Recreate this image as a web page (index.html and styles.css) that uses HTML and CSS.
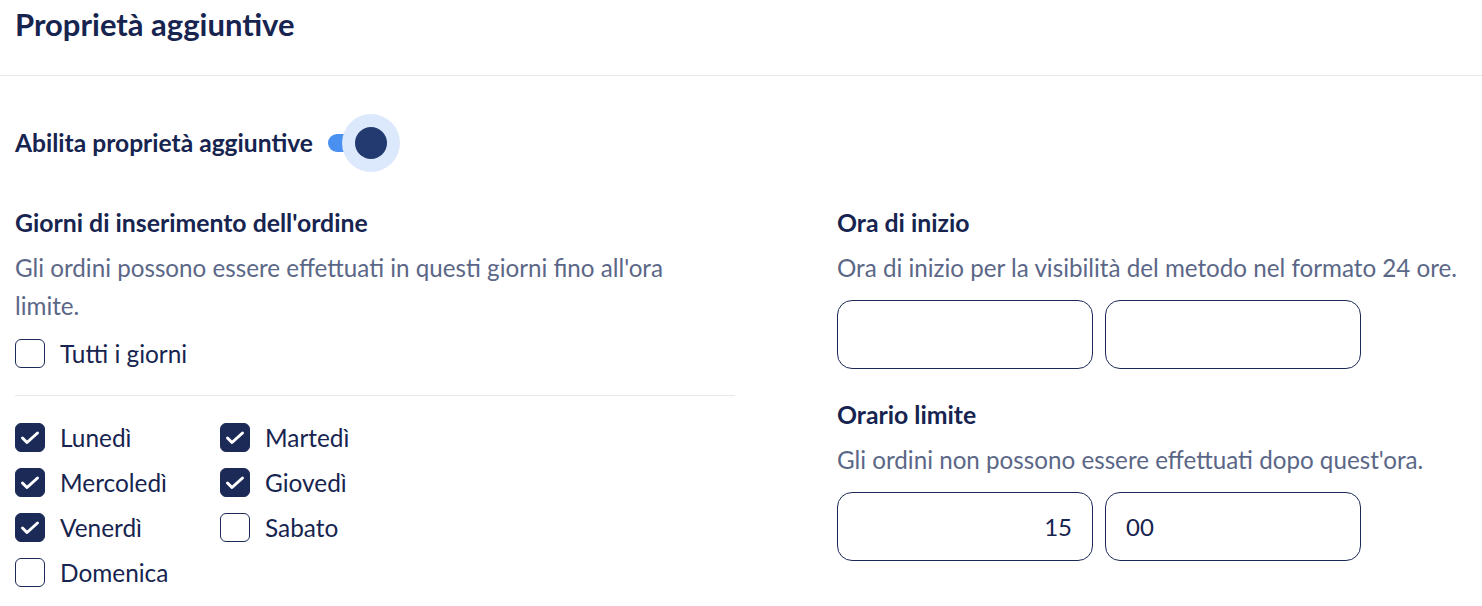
FILE: index.html
```html
<!DOCTYPE html>
<html lang="it">
<head>
<meta charset="utf-8">
<title>Proprietà aggiuntive</title>
<link rel="stylesheet" href="styles.css">
</head>
<body>
<header class="header">
  <h1 class="title">Proprietà aggiuntive</h1>
</header>
<main class="content">
  <div class="toggle-row">
    <span class="toggle-label">Abilita proprietà aggiuntive</span>
    <span class="toggle">
      <span class="toggle-track"></span>
      <span class="toggle-knob"></span>
    </span>
  </div>

  <div class="columns">
    <section class="col-left">
      <h3 class="field-title">Giorni di inserimento dell'ordine</h3>
      <p class="field-desc wrap">Gli ordini possono essere effettuati in questi giorni fino all'ora limite.</p>
      <label class="check all-days"><span class="box"></span><span class="check-text">Tutti i giorni</span></label>
      <hr class="divider">
      <div class="days">
        <label class="check"><span class="box checked"><svg viewBox="0 0 30 29"><polyline points="7.5,15 12,19.5 22.5,10"/></svg></span><span class="check-text">Lunedì</span></label>
        <label class="check"><span class="box checked"><svg viewBox="0 0 30 29"><polyline points="7.5,15 12,19.5 22.5,10"/></svg></span><span class="check-text">Martedì</span></label>
        <label class="check"><span class="box checked"><svg viewBox="0 0 30 29"><polyline points="7.5,15 12,19.5 22.5,10"/></svg></span><span class="check-text">Mercoledì</span></label>
        <label class="check"><span class="box checked"><svg viewBox="0 0 30 29"><polyline points="7.5,15 12,19.5 22.5,10"/></svg></span><span class="check-text">Giovedì</span></label>
        <label class="check"><span class="box checked"><svg viewBox="0 0 30 29"><polyline points="7.5,15 12,19.5 22.5,10"/></svg></span><span class="check-text">Venerdì</span></label>
        <label class="check"><span class="box"></span><span class="check-text">Sabato</span></label>
        <label class="check"><span class="box"></span><span class="check-text">Domenica</span></label>
      </div>
    </section>

    <section class="col-right">
      <h3 class="field-title">Ora di inizio</h3>
      <p class="field-desc">Ora di inizio per la visibilità del metodo nel formato 24 ore.</p>
      <div class="time-inputs">
        <div class="time-box right"></div>
        <div class="time-box"></div>
      </div>
      <h3 class="field-title second">Orario limite</h3>
      <p class="field-desc">Gli ordini non possono essere effettuati dopo quest'ora.</p>
      <div class="time-inputs">
        <div class="time-box right">15</div>
        <div class="time-box">00</div>
      </div>
    </section>
  </div>
</main>
</body>
</html>
```

FILE: styles.css
```css
* { box-sizing: border-box; }

body {
  margin: 0;
  background: #ffffff;
  font-family: "Lato", "Noto Sans", sans-serif;
  color: #16244f;
}

.header {
  height: 76px;
  padding: 6px 15px 0;
  border-bottom: 1px solid #e6e7ea;
}

.title {
  margin: 0;
  font-size: 31px;
  line-height: 36px;
  font-weight: 700;
  color: #16244f;
}

.content {
  padding: 0 15px;
}

.toggle-row {
  display: flex;
  align-items: center;
  gap: 15px;
  margin-top: 38px;
  height: 57px;
}

.toggle-label {
  font-size: 24.6px;
  font-weight: 700;
  color: #16244f;
}

.toggle {
  position: relative;
  width: 44px;
  height: 57px;
  display: flex;
  align-items: center;
}

.toggle-track {
  display: block;
  width: 44px;
  height: 18px;
  border-radius: 9px;
  background: #4a90f1;
}

.toggle-knob {
  position: absolute;
  left: 27px;
  top: 12.5px;
  width: 32px;
  height: 32px;
  border-radius: 50%;
  background: #223a6f;
  box-shadow: 0 0 0 13px #dce8fb;
}

.columns {
  display: grid;
  grid-template-columns: 720px 1fr;
  column-gap: 102px;
  margin-top: 37px;
}

.field-title {
  margin: 0;
  font-size: 24.8px;
  line-height: 30px;
  font-weight: 700;
  color: #16244f;
}

.field-title.second {
  margin-top: 31px;
}

.field-desc {
  margin: 11px 0 0;
  font-size: 24.2px;
  line-height: 38px;
  color: #5b6787;
}

.field-desc.wrap {
  max-width: 700px;
}

.check {
  display: flex;
  align-items: center;
  gap: 15px;
  height: 29px;
  font-size: 24.4px;
  color: #16244f;
}

.all-days {
  margin-top: 14px;
}

.box {
  width: 30px;
  height: 29px;
  border: 1.5px solid #1c2a58;
  border-radius: 6px;
  flex: none;
  position: relative;
}

.box.checked {
  background: #1c2a58;
}

.box svg {
  position: absolute;
  left: -1.5px;
  top: -1.5px;
  width: 30px;
  height: 29px;
}

.box polyline {
  fill: none;
  stroke: #ffffff;
  stroke-width: 3;
  stroke-linecap: round;
  stroke-linejoin: round;
}

.divider {
  margin: 27px 0 0;
  border: 0;
  border-top: 1px solid #e6e7ea;
}

.days {
  display: grid;
  grid-template-columns: 205px 205px;
  row-gap: 16px;
  margin-top: 27px;
}

.time-inputs {
  display: flex;
  gap: 12px;
  margin-top: 13px;
}

.time-box {
  width: 256px;
  height: 69px;
  border: 1.5px solid #1c2a58;
  border-radius: 15px;
  padding: 0 20px;
  display: flex;
  align-items: center;
  font-size: 24px;
  color: #16244f;
}

.time-box.right {
  justify-content: flex-end;
}
```
